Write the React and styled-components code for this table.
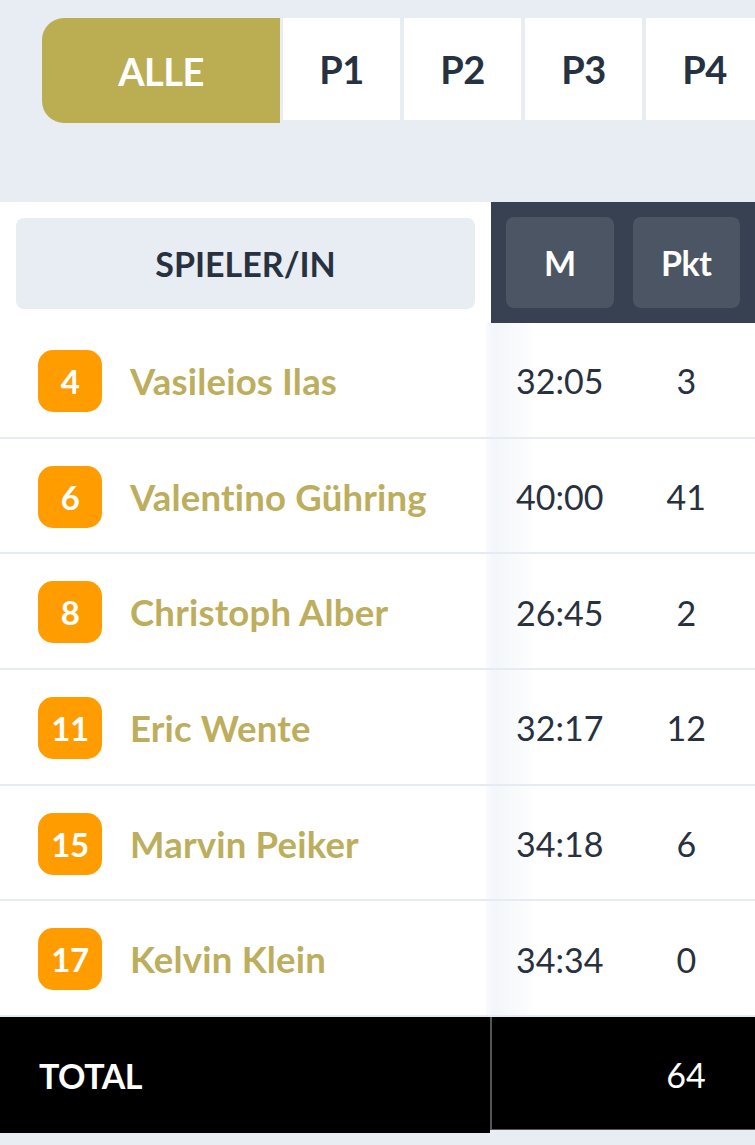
import React from 'react';
import styled, { createGlobalStyle } from 'styled-components';

const GlobalStyle = createGlobalStyle`
  html, body {
    margin: 0;
    padding: 0;
    background: #e8edf3;
    font-family: Lato, "Open Sans", "Liberation Sans", sans-serif;
  }
  * {
    box-sizing: border-box;
  }
`;

const periods = ['ALLE', 'P1', 'P2', 'P3', 'P4'];

const players = [
  { nr: 4, name: 'Vasileios Ilas', min: '32:05', pts: 3 },
  { nr: 6, name: 'Valentino Gühring', min: '40:00', pts: 41 },
  { nr: 8, name: 'Christoph Alber', min: '26:45', pts: 2 },
  { nr: 11, name: 'Eric Wente', min: '32:17', pts: 12 },
  { nr: 15, name: 'Marvin Peiker', min: '34:18', pts: 6 },
  { nr: 17, name: 'Kelvin Klein', min: '34:34', pts: 0 },
];

const App = () => (
  <Page>
    <GlobalStyle />
    <TabBar>
      {periods.map((p, i) => (
        <Tab key={p} active={i === 0}>
          {p}
        </Tab>
      ))}
    </TabBar>
    <Table>
      <HeadRow>
        <HeadLeft>
          <HeadLabel>SPIELER/IN</HeadLabel>
        </HeadLeft>
        <HeadRight>
          <HeadCell>M</HeadCell>
          <HeadCell>Pkt</HeadCell>
        </HeadRight>
      </HeadRow>
      {players.map((pl) => (
        <Row key={pl.nr}>
          <PlayerCell>
            <Badge>{pl.nr}</Badge>
            <Name>{pl.name}</Name>
          </PlayerCell>
          <StatsCell>
            <Stat>{pl.min}</Stat>
            <Stat>{pl.pts}</Stat>
          </StatsCell>
        </Row>
      ))}
      <TotalRow>
        <TotalLeft>TOTAL</TotalLeft>
        <TotalRight>
          <Stat />
          <Stat>64</Stat>
        </TotalRight>
      </TotalRow>
    </Table>
  </Page>
);

const Page = styled.div`
  width: 755px;
  min-height: 1145px;
  overflow: hidden;
  background: #e8edf3;
`;

const TabBar = styled.div`
  display: flex;
  gap: 4px;
  padding: 18px 0 0 42px;
  height: 202px;
  overflow: hidden;
`;

const Tab = styled.div`
  flex: 0 0 ${(p) => (p.active ? '238px' : '117px')};
  height: ${(p) => (p.active ? '105px' : '102px')};
  display: flex;
  align-items: center;
  justify-content: center;
  background: ${(p) => (p.active ? '#bbad52' : '#ffffff')};
  color: ${(p) => (p.active ? '#ffffff' : '#263142')};
  border-radius: ${(p) => (p.active ? '22px 0 0 22px' : '0')};
  font-size: 38px;
  font-weight: 700;
  letter-spacing: -0.5px;
  margin-right: ${(p) => (p.active ? '-1px' : '0')};
`;

const Table = styled.div`
  display: flex;
  flex-direction: column;
`;

const HeadRow = styled.div`
  display: grid;
  grid-template-columns: 491px 1fr;
  height: 121px;
`;

const HeadLeft = styled.div`
  background: #ffffff;
  padding: 16px;
`;

const HeadLabel = styled.div`
  height: 91px;
  border-radius: 8px;
  background: #e8edf3;
  display: flex;
  align-items: center;
  justify-content: center;
  color: #28313f;
  font-size: 34px;
  font-weight: 700;
  letter-spacing: 0;
`;

const HeadRight = styled.div`
  background: #374151;
  display: grid;
  grid-template-columns: 1fr 1fr;
  gap: 19px;
  padding: 15px;
  border-bottom: 2px solid #cfd6df;
`;

const HeadCell = styled.div`
  background: #4b5563;
  border-radius: 8px;
  display: flex;
  align-items: center;
  justify-content: center;
  color: #ffffff;
  font-size: 34px;
  font-weight: 700;
  letter-spacing: -0.5px;
`;

const Row = styled.div`
  display: grid;
  grid-template-columns: 491px 1fr;
  height: 115.7px;
  background: #ffffff;
  border-bottom: 2px solid #e6ebf1;
  &:last-of-type {
    border-bottom: none;
  }
`;

const PlayerCell = styled.div`
  display: flex;
  align-items: center;
  gap: 28px;
  padding-left: 38px;
`;

const Badge = styled.div`
  width: 64px;
  height: 62px;
  border-radius: 15px;
  background: #ff9d00;
  color: #ffffff;
  display: flex;
  align-items: center;
  justify-content: center;
  font-size: 33px;
  font-weight: 700;
  letter-spacing: -0.5px;
  margin-top: 2px;
`;

const Name = styled.div`
  color: #bcae5c;
  font-size: 36.5px;
  font-weight: 700;
  letter-spacing: 0.2px;
  margin-top: 2px;
`;

const StatsCell = styled.div`
  display: grid;
  grid-template-columns: 1fr 1fr;
  gap: 19px;
  align-items: center;
  margin-left: -5px;
  padding: 0 15px 0 20px;
  background: linear-gradient(to right, #fafbfd 0px, #f3f6fa 8px, #fbfcfd 40px, #ffffff 48px);
`;

const Stat = styled.div`
  text-align: center;
  color: #28313f;
  font-size: 34px;
  font-weight: 400;
  margin-top: 2px;
`;

const TotalRow = styled.div`
  display: grid;
  grid-template-columns: 490px 1fr;
  height: 116px;
`;

const TotalLeft = styled.div`
  background: #000000;
  color: #ffffff;
  font-size: 34px;
  font-weight: 700;
  letter-spacing: -0.5px;
  display: flex;
  align-items: center;
  padding-left: 39px;
`;

const TotalRight = styled.div`
  background: #000000;
  border-left: 2px solid #555555;
  border-bottom: 1px solid #555555;
  height: 113px;
  display: grid;
  grid-template-columns: 1fr 1fr;
  gap: 19px;
  padding: 0 15px 0 13px;
  align-items: center;

  ${Stat} {
    color: #ffffff;
  }
`;

export default App;
